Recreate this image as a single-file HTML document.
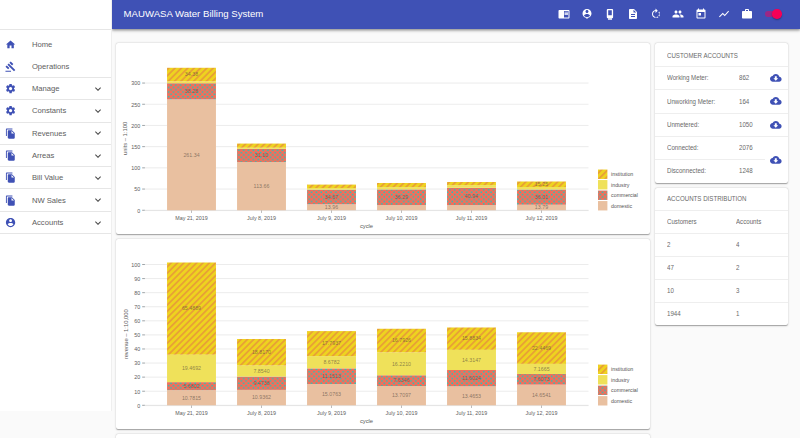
<!DOCTYPE html>
<html><head><meta charset="utf-8"><style>
*{box-sizing:border-box;margin:0;padding:0}
html,body{width:800px;height:438px;overflow:hidden;background:#fafafa;font-family:"Liberation Sans",sans-serif;position:relative}
.abs{position:absolute}
.ic{position:absolute;display:block}
#side{position:absolute;left:0;top:0;width:112px;height:410.5px;background:#fff;border-right:1px solid #efefef}
.hr{position:absolute;left:0;height:1px;background:#e6e6e6}
.nav{position:absolute;left:31.9px;font-size:7.65px;color:#606060;white-space:nowrap;line-height:1}
#bar{position:absolute;left:112px;top:0;width:688px;height:29px;background:#3f51b5;box-shadow:0 1px 2px -0.3px rgba(0,0,0,.25),0 2px 2.6px 0 rgba(0,0,0,.16),0 0.5px 5px 0 rgba(0,0,0,.12);clip-path:inset(0 -10px -12px 0)}
#title{position:absolute;left:123.6px;top:9.2px;font-size:9.62px;color:#fff;white-space:nowrap;line-height:1}
.card{position:absolute;background:#fff;border-radius:2px;box-shadow:0 0.6px 2px rgba(0,0,0,.22),0 0.6px 0.7px rgba(0,0,0,.14),0 1px 0.5px -0.5px rgba(0,0,0,.12)}
.ct{position:absolute;font-size:6.75px;color:#6a6a6a;white-space:nowrap;line-height:1;transform:scaleX(.91);transform-origin:0 50%}
svg.chart{position:absolute;left:0;top:0;overflow:visible}
</style></head>
<body>
<div id="side"></div><div class="hr" style="top:29px;width:111px"></div><svg class="ic " style="left:5.20px;top:38.92px;width:11.15px;height:11.15px" viewBox="0 0 24 24"><path fill="#3f51b5" d="M10 20v-6h4v6h5v-8h3L12 3 2 12h3v8z"/></svg><div class="nav" style="top:41.00px">Home</div><svg class="ic " style="left:5.20px;top:61.12px;width:11.15px;height:11.15px" viewBox="0 0 24 24"><path fill="#3f51b5" d="M1 21h12v2H1zM5.245 8.07l2.83-2.827 14.14 14.142-2.828 2.828zM12.317 1l5.657 5.656-2.83 2.83-5.654-5.66zM3.825 9.485l5.657 5.657-2.828 2.828-5.657-5.657z"/></svg><div class="nav" style="top:63.20px">Operations</div><svg class="ic " style="left:5.20px;top:83.02px;width:11.15px;height:11.15px" viewBox="0 0 24 24"><path fill="#3f51b5" d="M19.43 12.98c.04-.32.07-.64.07-.98s-.03-.66-.07-.98l2.11-1.65c.19-.15.24-.42.12-.64l-2-3.46c-.12-.22-.39-.3-.61-.22l-2.49 1c-.52-.4-1.08-.73-1.69-.98l-.38-2.65C14.46 2.18 14.25 2 14 2h-4c-.25 0-.46.18-.49.42l-.38 2.65c-.61.25-1.17.59-1.69.98l-2.49-1c-.23-.09-.49 0-.61.22l-2 3.46c-.13.22-.07.49.12.64l2.11 1.65c-.04.32-.07.65-.07.98s.03.66.07.98l-2.11 1.65c-.19.15-.24.42-.12.64l2 3.46c.12.22.39.3.61.22l2.49-1c.52.4 1.08.73 1.69.98l.38 2.65c.03.24.24.42.49.42h4c.25 0 .46-.18.49-.42l.38-2.65c.61-.25 1.17-.59 1.69-.98l2.49 1c.23.09.49 0 .61-.22l2-3.46c.12-.22.07-.49-.12-.64l-2.11-1.65zM12 15.5c-1.93 0-3.5-1.57-3.5-3.5s1.57-3.5 3.5-3.5 3.5 1.57 3.5 3.5-1.57 3.5-3.5 3.5z"/></svg><div class="nav" style="top:85.10px">Manage</div><svg class="ic " style="left:91.90px;top:82.80px;width:12px;height:12px" viewBox="0 0 24 24"><path fill="#4a4a4a" d="M16.59 8.59L12 13.17 7.41 8.59 6 10l6 6 6-6z"/></svg><svg class="ic " style="left:5.20px;top:105.33px;width:11.15px;height:11.15px" viewBox="0 0 24 24"><path fill="#3f51b5" d="M19.43 12.98c.04-.32.07-.64.07-.98s-.03-.66-.07-.98l2.11-1.65c.19-.15.24-.42.12-.64l-2-3.46c-.12-.22-.39-.3-.61-.22l-2.49 1c-.52-.4-1.08-.73-1.69-.98l-.38-2.65C14.46 2.18 14.25 2 14 2h-4c-.25 0-.46.18-.49.42l-.38 2.65c-.61.25-1.17.59-1.69.98l-2.49-1c-.23-.09-.49 0-.61.22l-2 3.46c-.13.22-.07.49.12.64l2.11 1.65c-.04.32-.07.65-.07.98s.03.66.07.98l-2.11 1.65c-.19.15-.24.42-.12.64l2 3.46c.12.22.39.3.61.22l2.49-1c.52.4 1.08.73 1.69.98l.38 2.65c.03.24.24.42.49.42h4c.25 0 .46-.18.49-.42l.38-2.65c.61-.25 1.17-.59 1.69-.98l2.49 1c.23.09.49 0 .61-.22l2-3.46c.12-.22.07-.49-.12-.64l-2.11-1.65zM12 15.5c-1.93 0-3.5-1.57-3.5-3.5s1.57-3.5 3.5-3.5 3.5 1.57 3.5 3.5-1.57 3.5-3.5 3.5z"/></svg><div class="nav" style="top:107.40px">Constants</div><svg class="ic " style="left:91.90px;top:105.10px;width:12px;height:12px" viewBox="0 0 24 24"><path fill="#4a4a4a" d="M16.59 8.59L12 13.17 7.41 8.59 6 10l6 6 6-6z"/></svg><svg class="ic " style="left:5.20px;top:127.62px;width:11.15px;height:11.15px" viewBox="0 0 24 24"><path fill="#3f51b5" d="M16 1H4c-1.1 0-2 .9-2 2v14h2V3h12V1zm-1 4l6 6v10c0 1.1-.9 2-2 2H7.99C6.89 23 6 22.1 6 21l.01-14c0-1.1.89-2 1.99-2h7zm-1 7h5.5L14 6.5V12z"/></svg><div class="nav" style="top:129.70px">Revenues</div><svg class="ic " style="left:91.90px;top:127.40px;width:12px;height:12px" viewBox="0 0 24 24"><path fill="#4a4a4a" d="M16.59 8.59L12 13.17 7.41 8.59 6 10l6 6 6-6z"/></svg><svg class="ic " style="left:5.20px;top:149.93px;width:11.15px;height:11.15px" viewBox="0 0 24 24"><path fill="#3f51b5" d="M16 1H4c-1.1 0-2 .9-2 2v14h2V3h12V1zm-1 4l6 6v10c0 1.1-.9 2-2 2H7.99C6.89 23 6 22.1 6 21l.01-14c0-1.1.89-2 1.99-2h7zm-1 7h5.5L14 6.5V12z"/></svg><div class="nav" style="top:152.00px">Arreas</div><svg class="ic " style="left:91.90px;top:149.70px;width:12px;height:12px" viewBox="0 0 24 24"><path fill="#4a4a4a" d="M16.59 8.59L12 13.17 7.41 8.59 6 10l6 6 6-6z"/></svg><svg class="ic " style="left:5.20px;top:172.23px;width:11.15px;height:11.15px" viewBox="0 0 24 24"><path fill="#3f51b5" d="M16 1H4c-1.1 0-2 .9-2 2v14h2V3h12V1zm-1 4l6 6v10c0 1.1-.9 2-2 2H7.99C6.89 23 6 22.1 6 21l.01-14c0-1.1.89-2 1.99-2h7zm-1 7h5.5L14 6.5V12z"/></svg><div class="nav" style="top:174.30px">Bill Value</div><svg class="ic " style="left:91.90px;top:172.00px;width:12px;height:12px" viewBox="0 0 24 24"><path fill="#4a4a4a" d="M16.59 8.59L12 13.17 7.41 8.59 6 10l6 6 6-6z"/></svg><svg class="ic " style="left:5.20px;top:194.53px;width:11.15px;height:11.15px" viewBox="0 0 24 24"><path fill="#3f51b5" d="M16 1H4c-1.1 0-2 .9-2 2v14h2V3h12V1zm-1 4l6 6v10c0 1.1-.9 2-2 2H7.99C6.89 23 6 22.1 6 21l.01-14c0-1.1.89-2 1.99-2h7zm-1 7h5.5L14 6.5V12z"/></svg><div class="nav" style="top:196.60px">NW Sales</div><svg class="ic " style="left:91.90px;top:194.30px;width:12px;height:12px" viewBox="0 0 24 24"><path fill="#4a4a4a" d="M16.59 8.59L12 13.17 7.41 8.59 6 10l6 6 6-6z"/></svg><svg class="ic " style="left:5.20px;top:216.83px;width:11.15px;height:11.15px" viewBox="0 0 24 24"><path fill="#3f51b5" d="M12 2C6.48 2 2 6.48 2 12s4.48 10 10 10 10-4.48 10-10S17.52 2 12 2zm0 3c1.66 0 3 1.34 3 3s-1.34 3-3 3-3-1.34-3-3 1.34-3 3-3zm0 14.2c-2.5 0-4.71-1.28-6-3.22.03-1.99 4-3.08 6-3.08 1.99 0 5.97 1.09 6 3.08-1.29 1.94-3.5 3.22-6 3.22z"/></svg><div class="nav" style="top:218.90px">Accounts</div><svg class="ic " style="left:91.90px;top:216.60px;width:12px;height:12px" viewBox="0 0 24 24"><path fill="#4a4a4a" d="M16.59 8.59L12 13.17 7.41 8.59 6 10l6 6 6-6z"/></svg><div class="hr" style="top:76.90px;width:111px"></div><div class="hr" style="top:99.20px;width:111px"></div><div class="hr" style="top:121.50px;width:111px"></div><div class="hr" style="top:143.80px;width:111px"></div><div class="hr" style="top:166.10px;width:111px"></div><div class="hr" style="top:188.40px;width:111px"></div><div class="hr" style="top:210.70px;width:111px"></div><div class="hr" style="top:233.00px;width:111px"></div><div id="bar"></div><div id="title">MAUWASA Water Billing System</div><svg class="ic " style="left:558.20px;top:7.90px;width:12px;height:12px" viewBox="0 0 24 24"><path fill="#fff" d="M21 4H3c-1.1 0-2 .9-2 2v13c0 1.1.9 2 2 2h18c1.1 0 2-.9 2-2V6c0-1.1-.9-2-2-2zm0 15h-9V6h9v13zm-1-11.5h-7V9h7V7.5zm0 2.5h-7v1.5h7V10zm0 2.5h-7V14h7v-1.5z"/></svg><svg class="ic " style="left:581.00px;top:7.90px;width:12px;height:12px" viewBox="0 0 24 24"><path fill="#fff" d="M12 2c-4.97 0-9 4.03-9 9 0 4.17 2.84 7.67 6.69 8.69L12 22l2.31-2.31C18.16 18.67 21 15.17 21 11c0-4.97-4.03-9-9-9zm0 2c1.66 0 3 1.34 3 3s-1.34 3-3 3-3-1.34-3-3 1.34-3 3-3zm0 14.3c-2.5 0-4.71-1.28-6-3.22.03-1.99 4-3.08 6-3.08 1.99 0 5.97 1.09 6 3.08-1.29 1.94-3.5 3.22-6 3.22z"/></svg><svg class="ic" style="left:600px;top:5px;width:20px;height:18px" viewBox="0 0 20 18"><path fill="#fff" fill-rule="evenodd" d="M7.8 3.9h4.3a1 1 0 0 1 1 1v7.4a1 1 0 0 1-1 1H7.8a1 1 0 0 1-1-1V4.9a1 1 0 0 1 1-1zM8.2 5.3v5h3.6v-5z"/><rect x="8" y="12.3" width="4" height="2.7" fill="#fff" fill-opacity="0.72"/></svg><svg class="ic " style="left:626.70px;top:7.90px;width:12px;height:12px" viewBox="0 0 24 24"><path fill="#fff" d="M14 2H6c-1.1 0-1.99.9-1.99 2L4 20c0 1.1.89 2 1.99 2H18c1.1 0 2-.9 2-2V8l-6-6zm2 16H8v-2h8v2zm0-4H8v-2h8v2zm-3-5V3.5L18.5 9H13z"/></svg><svg class="ic " style="left:649.50px;top:7.90px;width:12px;height:12px" viewBox="0 0 24 24"><path fill="#fff" d="M15.55 5.55L11 1v3.07C7.06 4.56 4 7.92 4 12s3.05 7.44 7 7.93v-2.02c-2.84-.48-5-2.94-5-5.91s2.16-5.43 5-5.91V10l4.55-4.45zM19.93 11c-.17-1.39-.72-2.73-1.62-3.89l-1.42 1.42c.54.75.88 1.6 1.02 2.47h2.02zM13 17.9v2.02c1.39-.17 2.74-.71 3.9-1.61l-1.44-1.44c-.75.54-1.59.89-2.46 1.03zm3.89-2.42l1.42 1.41c.9-1.16 1.45-2.5 1.62-3.89h-2.02c-.14.87-.48 1.72-1.02 2.48z"/></svg><svg class="ic " style="left:672.30px;top:7.90px;width:12px;height:12px" viewBox="0 0 24 24"><path fill="#fff" d="M16 11c1.66 0 2.99-1.34 2.99-3S17.66 5 16 5c-1.66 0-3 1.34-3 3s1.34 3 3 3zm-8 0c1.66 0 2.99-1.34 2.99-3S9.66 5 8 5C6.34 5 5 6.34 5 8s1.34 3 3 3zm0 2c-2.33 0-7 1.17-7 3.5V19h14v-2.5c0-2.33-4.67-3.5-7-3.5zm8 0c-.29 0-.62.02-.97.05 1.16.84 1.970 1.97 1.97 3.45V19h6v-2.5c0-2.330-4.67-3.5-7-3.5z"/></svg><svg class="ic " style="left:695.10px;top:7.90px;width:12px;height:12px" viewBox="0 0 24 24"><path fill="#fff" d="M19 3h-1V1h-2v2H8V1H6v2H5c-1.11 0-1.99.9-1.99 2L3 19c0 1.1.89 2 2 2h14c1.1 0 2-.9 2-2V5c0-1.1-.9-2-2-2zm0 16H5V8h14v11zM7 10h5v5H7z"/></svg><svg class="ic " style="left:718.00px;top:7.90px;width:12px;height:12px" viewBox="0 0 24 24"><path fill="#fff" d="M3.5 18.49l6-6.01 4 4L22 6.92l-1.41-1.41-7.09 7.970-4-4L2 16.99z"/></svg><svg class="ic " style="left:740.80px;top:7.90px;width:12px;height:12px" viewBox="0 0 24 24"><path fill="#fff" d="M20 6h-4V4c0-1.11-.89-2-2-2h-4c-1.11 0-2 .89-2 2v2H4c-1.11 0-1.99.89-1.99 2L2 19c0 1.11.89 2 2 2h16c1.11 0 2-.89 2-2V8c0-1.11-.89-2-2-2zm-6 0h-4V4h4v2z"/></svg><div class="abs" style="left:765px;top:10.9px;width:15.8px;height:6.5px;border-radius:3.25px;background:#f50057;opacity:.5"></div><div class="abs" style="left:772.2px;top:9.35px;width:9.4px;height:9.4px;border-radius:50%;background:#f50057;box-shadow:0 1px 1.5px rgba(0,0,0,.3)"></div><div class="card" style="left:116px;top:43.3px;width:534px;height:190.7px"></div><div class="card" style="left:116px;top:238.8px;width:534px;height:190.2px"></div><div class="card" style="left:116px;top:434px;width:534px;height:60px"></div><div class="card" style="left:654.7px;top:43.2px;width:133.5px;height:139.4px"></div><div class="card" style="left:654.7px;top:187.5px;width:133.5px;height:137.8px"></div><div class="ct" style="left:666.8px;top:52.5px">CUSTOMER ACCOUNTS</div><div class="hr" style="left:654.7px;top:65.90px;width:133.5px;background:#eee"></div><div class="hr" style="left:654.7px;top:89.30px;width:133.5px;background:#eee"></div><div class="hr" style="left:654.7px;top:112.60px;width:133.5px;background:#eee"></div><div class="hr" style="left:654.7px;top:135.90px;width:133.5px;background:#eee"></div><div class="hr" style="left:654.7px;top:158.8px;width:110px;background:#eee"></div><div class="ct" style="left:666.8px;top:75.30px">Working Meter:</div><div class="ct" style="left:738.8px;top:75.30px">862</div><div class="ct" style="left:666.8px;top:98.60px">Unworking Meter:</div><div class="ct" style="left:738.8px;top:98.60px">164</div><div class="ct" style="left:666.8px;top:121.90px">Unmetered:</div><div class="ct" style="left:738.8px;top:121.90px">1050</div><div class="ct" style="left:666.8px;top:145.00px">Connected:</div><div class="ct" style="left:738.8px;top:145.00px">2076</div><div class="ct" style="left:666.8px;top:167.80px">Disconnected:</div><div class="ct" style="left:738.8px;top:167.80px">1248</div><svg class="ic " style="left:770.30px;top:72.10px;width:11.6px;height:11.6px" viewBox="0 0 24 24"><path fill="#3f51b5" d="M19.35 10.04C18.67 6.59 15.64 4 12 4 9.11 4 6.6 5.64 5.35 8.04 2.34 8.36 0 10.91 0 14c0 3.31 2.69 6 6 6h13c2.76 0 5-2.24 5-5 0-2.64-2.05-4.78-4.65-4.96zM17 13l-5 5-5-5h3V9h4v4h3z"/></svg><svg class="ic " style="left:770.30px;top:95.40px;width:11.6px;height:11.6px" viewBox="0 0 24 24"><path fill="#3f51b5" d="M19.35 10.04C18.67 6.59 15.64 4 12 4 9.11 4 6.6 5.64 5.35 8.04 2.34 8.36 0 10.91 0 14c0 3.31 2.69 6 6 6h13c2.76 0 5-2.24 5-5 0-2.64-2.05-4.78-4.65-4.96zM17 13l-5 5-5-5h3V9h4v4h3z"/></svg><svg class="ic " style="left:770.30px;top:118.70px;width:11.6px;height:11.6px" viewBox="0 0 24 24"><path fill="#3f51b5" d="M19.35 10.04C18.67 6.59 15.64 4 12 4 9.11 4 6.6 5.64 5.35 8.04 2.34 8.36 0 10.91 0 14c0 3.31 2.69 6 6 6h13c2.76 0 5-2.24 5-5 0-2.64-2.05-4.78-4.65-4.96zM17 13l-5 5-5-5h3V9h4v4h3z"/></svg><svg class="ic " style="left:770.30px;top:153.70px;width:11.6px;height:11.6px" viewBox="0 0 24 24"><path fill="#3f51b5" d="M19.35 10.04C18.67 6.59 15.64 4 12 4 9.11 4 6.6 5.64 5.35 8.04 2.34 8.36 0 10.91 0 14c0 3.31 2.69 6 6 6h13c2.76 0 5-2.24 5-5 0-2.64-2.05-4.78-4.65-4.96zM17 13l-5 5-5-5h3V9h4v4h3z"/></svg><div class="ct" style="left:666.8px;top:196.0px">ACCOUNTS DISTRIBUTION</div><div class="hr" style="left:654.7px;top:209.60px;width:133.5px;background:#eee"></div><div class="hr" style="left:654.7px;top:232.80px;width:133.5px;background:#eee"></div><div class="hr" style="left:654.7px;top:255.90px;width:133.5px;background:#eee"></div><div class="hr" style="left:654.7px;top:278.90px;width:133.5px;background:#eee"></div><div class="hr" style="left:654.7px;top:301.90px;width:133.5px;background:#eee"></div><div class="ct" style="left:666.8px;top:219.1px">Customers</div><div class="ct" style="left:735.8px;top:219.1px">Accounts</div><div class="ct" style="left:666.8px;top:242.20px">2</div><div class="ct" style="left:735.8px;top:242.20px">4</div><div class="ct" style="left:666.8px;top:265.30px">47</div><div class="ct" style="left:735.8px;top:265.30px">2</div><div class="ct" style="left:666.8px;top:288.30px">10</div><div class="ct" style="left:735.8px;top:288.30px">3</div><div class="ct" style="left:666.8px;top:311.30px">1944</div><div class="ct" style="left:735.8px;top:311.30px">1</div><svg class="chart" width="800" height="438" viewBox="0 0 800 438"><defs>
<pattern id="sta" patternUnits="userSpaceOnUse" width="4.5" height="4.5" patternTransform="rotate(45)">
<rect width="4.5" height="4.5" fill="#eed31f"/><rect width="1.75" height="4.5" fill="#e8a036"/></pattern>
<pattern id="dta" patternUnits="userSpaceOnUse" width="4.85" height="4.66">
<rect width="4.85" height="4.66" fill="#f96b57"/><circle cx="1.21" cy="1.16" r="0.95" fill="#2cc3b7"/><circle cx="3.64" cy="3.5" r="0.95" fill="#2cc3b7"/></pattern>
</defs><line x1="144.7" x2="588.5" y1="210.25" y2="210.25" stroke="#e6e6e6" stroke-width="0.75"/><line x1="142.2" x2="144.9" y1="210.25" y2="210.25" stroke="#7d868b" stroke-width="0.75"/><text x="140.2" y="212.55" text-anchor="end" font-size="5.4" fill="#606060">0</text><line x1="144.7" x2="588.5" y1="189.05" y2="189.05" stroke="#e6e6e6" stroke-width="0.75"/><line x1="142.2" x2="144.9" y1="189.05" y2="189.05" stroke="#7d868b" stroke-width="0.75"/><text x="140.2" y="191.35" text-anchor="end" font-size="5.4" fill="#606060">50</text><line x1="144.7" x2="588.5" y1="167.85" y2="167.85" stroke="#e6e6e6" stroke-width="0.75"/><line x1="142.2" x2="144.9" y1="167.85" y2="167.85" stroke="#7d868b" stroke-width="0.75"/><text x="140.2" y="170.15" text-anchor="end" font-size="5.4" fill="#606060">100</text><line x1="144.7" x2="588.5" y1="146.65" y2="146.65" stroke="#e6e6e6" stroke-width="0.75"/><line x1="142.2" x2="144.9" y1="146.65" y2="146.65" stroke="#7d868b" stroke-width="0.75"/><text x="140.2" y="148.95" text-anchor="end" font-size="5.4" fill="#606060">150</text><line x1="144.7" x2="588.5" y1="125.45" y2="125.45" stroke="#e6e6e6" stroke-width="0.75"/><line x1="142.2" x2="144.9" y1="125.45" y2="125.45" stroke="#7d868b" stroke-width="0.75"/><text x="140.2" y="127.75" text-anchor="end" font-size="5.4" fill="#606060">200</text><line x1="144.7" x2="588.5" y1="104.25" y2="104.25" stroke="#e6e6e6" stroke-width="0.75"/><line x1="142.2" x2="144.9" y1="104.25" y2="104.25" stroke="#7d868b" stroke-width="0.75"/><text x="140.2" y="106.55" text-anchor="end" font-size="5.4" fill="#606060">250</text><line x1="144.7" x2="588.5" y1="83.05" y2="83.05" stroke="#e6e6e6" stroke-width="0.75"/><line x1="142.2" x2="144.9" y1="83.05" y2="83.05" stroke="#7d868b" stroke-width="0.75"/><text x="140.2" y="85.35" text-anchor="end" font-size="5.4" fill="#606060">300</text><line x1="144.7" x2="588.5" y1="210.55" y2="210.55" stroke="#e0e0e0" stroke-width="0.75"/><line x1="191.5" x2="191.5" y1="210.25" y2="212.95" stroke="#a0a0a0" stroke-width="0.7"/><text x="191.5" y="219.95" text-anchor="middle" font-size="5.35" fill="#606060">May 21, 2019</text><rect x="167.05" y="99.44" width="48.9" height="110.81" fill="#e9c0a0"/><text x="191.5" y="156.65" text-anchor="middle" font-size="5.3" fill="#4a4038" fill-opacity="0.6">261.34</text><rect x="167.05" y="83.21" width="48.9" height="16.23" fill="url(#dta)"/><text x="191.5" y="93.13" text-anchor="middle" font-size="5.3" fill="#4a4038" fill-opacity="0.6">38.28</text><rect x="167.05" y="81.30" width="48.9" height="1.91" fill="#efe15a"/><rect x="167.05" y="67.78" width="48.9" height="13.53" fill="url(#sta)"/><text x="191.5" y="76.34" text-anchor="middle" font-size="5.3" fill="#4a4038" fill-opacity="0.6">34.38</text><line x1="261.5" x2="261.5" y1="210.25" y2="212.95" stroke="#a0a0a0" stroke-width="0.7"/><text x="261.5" y="219.95" text-anchor="middle" font-size="5.35" fill="#606060">July 8, 2019</text><rect x="237.05" y="162.06" width="48.9" height="48.19" fill="#e9c0a0"/><text x="261.5" y="187.95" text-anchor="middle" font-size="5.3" fill="#4a4038" fill-opacity="0.6">113.66</text><rect x="237.05" y="148.87" width="48.9" height="13.19" fill="url(#dta)"/><text x="261.5" y="157.26" text-anchor="middle" font-size="5.3" fill="#4a4038" fill-opacity="0.6">31.10</text><rect x="237.05" y="147.73" width="48.9" height="1.14" fill="#efe15a"/><rect x="237.05" y="143.57" width="48.9" height="4.16" fill="url(#sta)"/><line x1="331.5" x2="331.5" y1="210.25" y2="212.95" stroke="#a0a0a0" stroke-width="0.7"/><text x="331.5" y="219.95" text-anchor="middle" font-size="5.35" fill="#606060">July 9, 2019</text><rect x="307.05" y="204.33" width="48.9" height="5.92" fill="#e9c0a0"/><text x="331.5" y="209.09" text-anchor="middle" font-size="5.3" fill="#4a4038" fill-opacity="0.6">13.96</text><rect x="307.05" y="189.63" width="48.9" height="14.70" fill="url(#dta)"/><text x="331.5" y="198.78" text-anchor="middle" font-size="5.3" fill="#4a4038" fill-opacity="0.6">34.67</text><rect x="307.05" y="187.98" width="48.9" height="1.65" fill="#efe15a"/><rect x="307.05" y="184.59" width="48.9" height="3.39" fill="url(#sta)"/><line x1="401.5" x2="401.5" y1="210.25" y2="212.95" stroke="#a0a0a0" stroke-width="0.7"/><text x="401.5" y="219.95" text-anchor="middle" font-size="5.35" fill="#606060">July 10, 2019</text><rect x="377.05" y="205.08" width="48.9" height="5.17" fill="#e9c0a0"/><rect x="377.05" y="189.39" width="48.9" height="15.69" fill="url(#dta)"/><text x="401.5" y="199.03" text-anchor="middle" font-size="5.3" fill="#4a4038" fill-opacity="0.6">36.29</text><rect x="377.05" y="187.14" width="48.9" height="2.25" fill="#efe15a"/><rect x="377.05" y="182.99" width="48.9" height="4.16" fill="url(#sta)"/><line x1="471.5" x2="471.5" y1="210.25" y2="212.95" stroke="#a0a0a0" stroke-width="0.7"/><text x="471.5" y="219.95" text-anchor="middle" font-size="5.35" fill="#606060">July 11, 2019</text><rect x="447.05" y="205.16" width="48.9" height="5.09" fill="#e9c0a0"/><rect x="447.05" y="187.80" width="48.9" height="17.36" fill="url(#dta)"/><text x="471.5" y="198.28" text-anchor="middle" font-size="5.3" fill="#4a4038" fill-opacity="0.6">40.94</text><rect x="447.05" y="185.13" width="48.9" height="2.67" fill="#efe15a"/><rect x="447.05" y="181.99" width="48.9" height="3.14" fill="url(#sta)"/><line x1="541.5" x2="541.5" y1="210.25" y2="212.95" stroke="#a0a0a0" stroke-width="0.7"/><text x="541.5" y="219.95" text-anchor="middle" font-size="5.35" fill="#606060">July 12, 2019</text><rect x="517.05" y="204.74" width="48.9" height="5.51" fill="#e9c0a0"/><text x="541.5" y="209.29" text-anchor="middle" font-size="5.3" fill="#4a4038" fill-opacity="0.6">13.79</text><rect x="517.05" y="189.47" width="48.9" height="15.27" fill="url(#dta)"/><text x="541.5" y="198.90" text-anchor="middle" font-size="5.3" fill="#4a4038" fill-opacity="0.6">36.01</text><rect x="517.05" y="187.01" width="48.9" height="2.46" fill="#efe15a"/><rect x="517.05" y="181.50" width="48.9" height="5.51" fill="url(#sta)"/><text x="541.5" y="186.05" text-anchor="middle" font-size="5.3" fill="#4a4038" fill-opacity="0.6">15.25</text><rect x="598" y="169.55" width="9.4" height="9.4" fill="url(#sta)"/><text x="611.1" y="176.15" font-size="5.25" fill="#555">institution</text><rect x="598" y="180.05" width="9.4" height="9.4" fill="#efe15a"/><text x="611.1" y="186.65" font-size="5.25" fill="#555">industry</text><rect x="598" y="190.55" width="9.4" height="9.4" fill="url(#dta)"/><text x="611.1" y="197.15" font-size="5.25" fill="#555">commercial</text><rect x="598" y="201.05" width="9.4" height="9.4" fill="#e9c0a0"/><text x="611.1" y="207.65" font-size="5.25" fill="#555">domestic</text><text x="366.5" y="227.65" text-anchor="middle" font-size="5.8" fill="#5a5a5a">cycle</text><text transform="translate(125.4,138.5) rotate(-90)" text-anchor="middle" font-size="5.8" fill="#606060" y="2">units – 1:100</text></svg><svg class="chart" width="800" height="438" viewBox="0 0 800 438"><defs>
<pattern id="stb" patternUnits="userSpaceOnUse" width="4.5" height="4.5" patternTransform="rotate(45)">
<rect width="4.5" height="4.5" fill="#eed31f"/><rect width="1.75" height="4.5" fill="#e8a036"/></pattern>
<pattern id="dtb" patternUnits="userSpaceOnUse" width="4.85" height="4.66">
<rect width="4.85" height="4.66" fill="#f96b57"/><circle cx="1.21" cy="1.16" r="0.95" fill="#2cc3b7"/><circle cx="3.64" cy="3.5" r="0.95" fill="#2cc3b7"/></pattern>
</defs><line x1="144.7" x2="588.5" y1="405.30" y2="405.30" stroke="#e6e6e6" stroke-width="0.75"/><line x1="142.2" x2="144.9" y1="405.30" y2="405.30" stroke="#7d868b" stroke-width="0.75"/><text x="140.2" y="407.60" text-anchor="end" font-size="5.4" fill="#606060">0</text><line x1="144.7" x2="588.5" y1="391.22" y2="391.22" stroke="#e6e6e6" stroke-width="0.75"/><line x1="142.2" x2="144.9" y1="391.22" y2="391.22" stroke="#7d868b" stroke-width="0.75"/><text x="140.2" y="393.52" text-anchor="end" font-size="5.4" fill="#606060">10</text><line x1="144.7" x2="588.5" y1="377.14" y2="377.14" stroke="#e6e6e6" stroke-width="0.75"/><line x1="142.2" x2="144.9" y1="377.14" y2="377.14" stroke="#7d868b" stroke-width="0.75"/><text x="140.2" y="379.44" text-anchor="end" font-size="5.4" fill="#606060">20</text><line x1="144.7" x2="588.5" y1="363.06" y2="363.06" stroke="#e6e6e6" stroke-width="0.75"/><line x1="142.2" x2="144.9" y1="363.06" y2="363.06" stroke="#7d868b" stroke-width="0.75"/><text x="140.2" y="365.36" text-anchor="end" font-size="5.4" fill="#606060">30</text><line x1="144.7" x2="588.5" y1="348.98" y2="348.98" stroke="#e6e6e6" stroke-width="0.75"/><line x1="142.2" x2="144.9" y1="348.98" y2="348.98" stroke="#7d868b" stroke-width="0.75"/><text x="140.2" y="351.28" text-anchor="end" font-size="5.4" fill="#606060">40</text><line x1="144.7" x2="588.5" y1="334.90" y2="334.90" stroke="#e6e6e6" stroke-width="0.75"/><line x1="142.2" x2="144.9" y1="334.90" y2="334.90" stroke="#7d868b" stroke-width="0.75"/><text x="140.2" y="337.20" text-anchor="end" font-size="5.4" fill="#606060">50</text><line x1="144.7" x2="588.5" y1="320.82" y2="320.82" stroke="#e6e6e6" stroke-width="0.75"/><line x1="142.2" x2="144.9" y1="320.82" y2="320.82" stroke="#7d868b" stroke-width="0.75"/><text x="140.2" y="323.12" text-anchor="end" font-size="5.4" fill="#606060">60</text><line x1="144.7" x2="588.5" y1="306.74" y2="306.74" stroke="#e6e6e6" stroke-width="0.75"/><line x1="142.2" x2="144.9" y1="306.74" y2="306.74" stroke="#7d868b" stroke-width="0.75"/><text x="140.2" y="309.04" text-anchor="end" font-size="5.4" fill="#606060">70</text><line x1="144.7" x2="588.5" y1="292.66" y2="292.66" stroke="#e6e6e6" stroke-width="0.75"/><line x1="142.2" x2="144.9" y1="292.66" y2="292.66" stroke="#7d868b" stroke-width="0.75"/><text x="140.2" y="294.96" text-anchor="end" font-size="5.4" fill="#606060">80</text><line x1="144.7" x2="588.5" y1="278.58" y2="278.58" stroke="#e6e6e6" stroke-width="0.75"/><line x1="142.2" x2="144.9" y1="278.58" y2="278.58" stroke="#7d868b" stroke-width="0.75"/><text x="140.2" y="280.88" text-anchor="end" font-size="5.4" fill="#606060">90</text><line x1="144.7" x2="588.5" y1="264.50" y2="264.50" stroke="#e6e6e6" stroke-width="0.75"/><line x1="142.2" x2="144.9" y1="264.50" y2="264.50" stroke="#7d868b" stroke-width="0.75"/><text x="140.2" y="266.80" text-anchor="end" font-size="5.4" fill="#606060">100</text><line x1="144.7" x2="588.5" y1="405.60" y2="405.60" stroke="#e0e0e0" stroke-width="0.75"/><line x1="191.5" x2="191.5" y1="405.3" y2="408.0" stroke="#a0a0a0" stroke-width="0.7"/><text x="191.5" y="415.00" text-anchor="middle" font-size="5.35" fill="#606060">May 21, 2019</text><rect x="167.05" y="390.12" width="48.9" height="15.18" fill="#e9c0a0"/><text x="191.5" y="399.51" text-anchor="middle" font-size="5.3" fill="#4a4038" fill-opacity="0.6">10.7815</text><rect x="167.05" y="382.12" width="48.9" height="8.00" fill="url(#dtb)"/><text x="191.5" y="387.92" text-anchor="middle" font-size="5.3" fill="#4a4038" fill-opacity="0.6">5.6802</text><rect x="167.05" y="354.71" width="48.9" height="27.41" fill="#efe15a"/><text x="191.5" y="370.22" text-anchor="middle" font-size="5.3" fill="#4a4038" fill-opacity="0.6">19.4692</text><rect x="167.05" y="262.50" width="48.9" height="92.21" fill="url(#stb)"/><text x="191.5" y="310.41" text-anchor="middle" font-size="5.3" fill="#4a4038" fill-opacity="0.6">65.4889</text><line x1="261.5" x2="261.5" y1="405.3" y2="408.0" stroke="#a0a0a0" stroke-width="0.7"/><text x="261.5" y="415.00" text-anchor="middle" font-size="5.35" fill="#606060">July 8, 2019</text><rect x="237.05" y="389.90" width="48.9" height="15.40" fill="#e9c0a0"/><text x="261.5" y="399.40" text-anchor="middle" font-size="5.3" fill="#4a4038" fill-opacity="0.6">10.9362</text><rect x="237.05" y="376.56" width="48.9" height="13.34" fill="url(#dtb)"/><text x="261.5" y="385.03" text-anchor="middle" font-size="5.3" fill="#4a4038" fill-opacity="0.6">9.4738</text><rect x="237.05" y="365.50" width="48.9" height="11.06" fill="#efe15a"/><text x="261.5" y="372.83" text-anchor="middle" font-size="5.3" fill="#4a4038" fill-opacity="0.6">7.8540</text><rect x="237.05" y="339.01" width="48.9" height="26.49" fill="url(#stb)"/><text x="261.5" y="354.06" text-anchor="middle" font-size="5.3" fill="#4a4038" fill-opacity="0.6">18.8170</text><line x1="331.5" x2="331.5" y1="405.3" y2="408.0" stroke="#a0a0a0" stroke-width="0.7"/><text x="331.5" y="415.00" text-anchor="middle" font-size="5.35" fill="#606060">July 9, 2019</text><rect x="307.05" y="384.07" width="48.9" height="21.23" fill="#e9c0a0"/><text x="331.5" y="396.49" text-anchor="middle" font-size="5.3" fill="#4a4038" fill-opacity="0.6">15.0763</text><rect x="307.05" y="368.37" width="48.9" height="15.70" fill="url(#dtb)"/><text x="331.5" y="378.02" text-anchor="middle" font-size="5.3" fill="#4a4038" fill-opacity="0.6">11.1513</text><rect x="307.05" y="356.15" width="48.9" height="12.22" fill="#efe15a"/><text x="331.5" y="364.06" text-anchor="middle" font-size="5.3" fill="#4a4038" fill-opacity="0.6">8.6782</text><rect x="307.05" y="331.10" width="48.9" height="25.05" fill="url(#stb)"/><text x="331.5" y="345.43" text-anchor="middle" font-size="5.3" fill="#4a4038" fill-opacity="0.6">17.7937</text><line x1="401.5" x2="401.5" y1="405.3" y2="408.0" stroke="#a0a0a0" stroke-width="0.7"/><text x="401.5" y="415.00" text-anchor="middle" font-size="5.35" fill="#606060">July 10, 2019</text><rect x="377.05" y="386.00" width="48.9" height="19.30" fill="#e9c0a0"/><text x="401.5" y="397.45" text-anchor="middle" font-size="5.3" fill="#4a4038" fill-opacity="0.6">13.7097</text><rect x="377.05" y="375.25" width="48.9" height="10.75" fill="url(#dtb)"/><text x="401.5" y="382.42" text-anchor="middle" font-size="5.3" fill="#4a4038" fill-opacity="0.6">7.6346</text><rect x="377.05" y="352.41" width="48.9" height="22.84" fill="#efe15a"/><text x="401.5" y="365.63" text-anchor="middle" font-size="5.3" fill="#4a4038" fill-opacity="0.6">16.2210</text><rect x="377.05" y="328.76" width="48.9" height="23.64" fill="url(#stb)"/><text x="401.5" y="342.39" text-anchor="middle" font-size="5.3" fill="#4a4038" fill-opacity="0.6">16.7926</text><line x1="471.5" x2="471.5" y1="405.3" y2="408.0" stroke="#a0a0a0" stroke-width="0.7"/><text x="471.5" y="415.00" text-anchor="middle" font-size="5.35" fill="#606060">July 11, 2019</text><rect x="447.05" y="386.34" width="48.9" height="18.96" fill="#e9c0a0"/><text x="471.5" y="397.62" text-anchor="middle" font-size="5.3" fill="#4a4038" fill-opacity="0.6">13.4653</text><rect x="447.05" y="370.00" width="48.9" height="16.34" fill="url(#dtb)"/><text x="471.5" y="379.97" text-anchor="middle" font-size="5.3" fill="#4a4038" fill-opacity="0.6">11.6024</text><rect x="447.05" y="349.85" width="48.9" height="20.16" fill="#efe15a"/><text x="471.5" y="361.73" text-anchor="middle" font-size="5.3" fill="#4a4038" fill-opacity="0.6">14.3147</text><rect x="447.05" y="327.49" width="48.9" height="22.36" fill="url(#stb)"/><text x="471.5" y="340.47" text-anchor="middle" font-size="5.3" fill="#4a4038" fill-opacity="0.6">15.8834</text><line x1="541.5" x2="541.5" y1="405.3" y2="408.0" stroke="#a0a0a0" stroke-width="0.7"/><text x="541.5" y="415.00" text-anchor="middle" font-size="5.35" fill="#606060">July 12, 2019</text><rect x="517.05" y="384.67" width="48.9" height="20.63" fill="#e9c0a0"/><text x="541.5" y="396.78" text-anchor="middle" font-size="5.3" fill="#4a4038" fill-opacity="0.6">14.6541</text><rect x="517.05" y="373.96" width="48.9" height="10.71" fill="url(#dtb)"/><text x="541.5" y="381.11" text-anchor="middle" font-size="5.3" fill="#4a4038" fill-opacity="0.6">7.6073</text><rect x="517.05" y="363.87" width="48.9" height="10.09" fill="#efe15a"/><text x="541.5" y="370.71" text-anchor="middle" font-size="5.3" fill="#4a4038" fill-opacity="0.6">7.1665</text><rect x="517.05" y="332.26" width="48.9" height="31.61" fill="url(#stb)"/><text x="541.5" y="349.86" text-anchor="middle" font-size="5.3" fill="#4a4038" fill-opacity="0.6">22.4469</text><rect x="598" y="364.60" width="9.4" height="9.4" fill="url(#stb)"/><text x="611.1" y="371.20" font-size="5.25" fill="#555">institution</text><rect x="598" y="375.10" width="9.4" height="9.4" fill="#efe15a"/><text x="611.1" y="381.70" font-size="5.25" fill="#555">industry</text><rect x="598" y="385.60" width="9.4" height="9.4" fill="url(#dtb)"/><text x="611.1" y="392.20" font-size="5.25" fill="#555">commercial</text><rect x="598" y="396.10" width="9.4" height="9.4" fill="#e9c0a0"/><text x="611.1" y="402.70" font-size="5.25" fill="#555">domestic</text><text x="366.5" y="422.70" text-anchor="middle" font-size="5.8" fill="#5a5a5a">cycle</text><text transform="translate(126,334.3) rotate(-90)" text-anchor="middle" font-size="5.8" fill="#606060" y="2">revenue – 1:10,000</text></svg>
</body></html>
